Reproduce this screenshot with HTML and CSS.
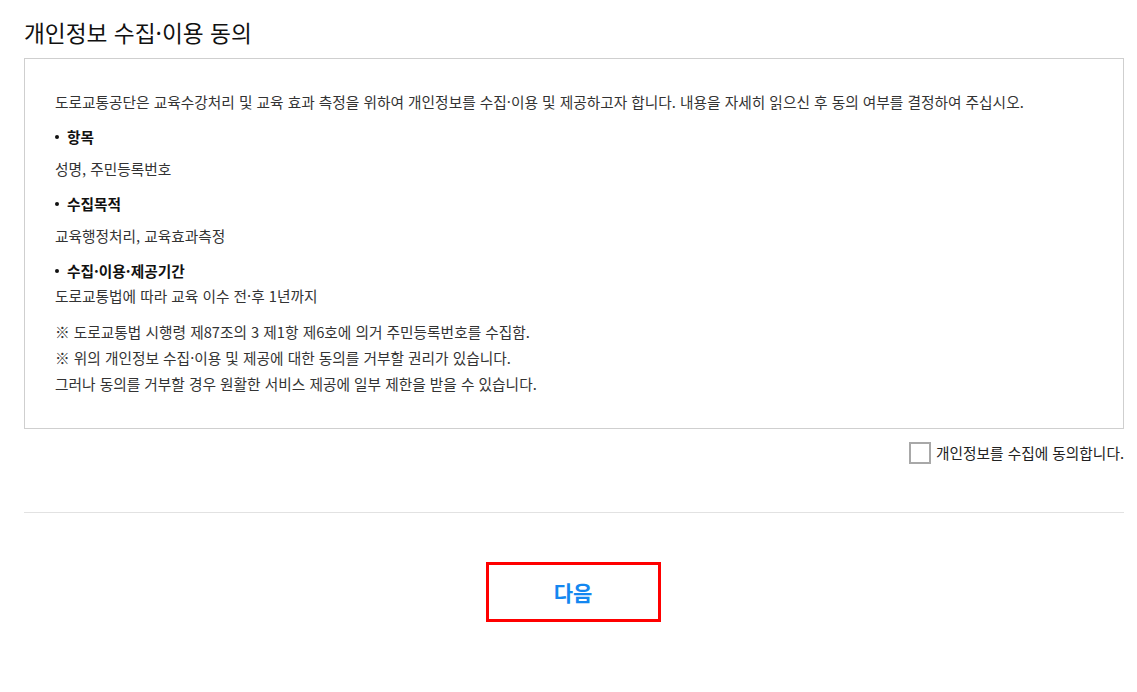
FILE: index.html
```html
<!DOCTYPE html>
<html lang="ko">
<head>
<meta charset="utf-8">
<title>개인정보 수집·이용 동의</title>
<link rel="stylesheet" href="styles.css">
</head>
<body>
<div class="page">
  <h2 class="title">개인정보 수집·이용 동의</h2>
  <div class="terms">
    <p class="intro">도로교통공단은 교육수강처리 및 교육 효과 측정을 위하여 개인정보를 수집·이용 및 제공하고자 합니다. 내용을 자세히 읽으신 후 동의 여부를 결정하여 주십시오.</p>
    <p class="head">항목</p>
    <p class="val">성명, 주민등록번호</p>
    <p class="head">수집목적</p>
    <p class="val">교육행정처리, 교육효과측정</p>
    <p class="head head-tight">수집·이용·제공기간</p>
    <p class="val val-last">도로교통법에 따라 교육 이수 전·후 1년까지</p>
    <div class="notes">
      <p>※ 도로교통법 시행령 제87조의 3 제1항 제6호에 의거 주민등록번호를 수집함.</p>
      <p>※ 위의 개인정보 수집·이용 및 제공에 대한 동의를 거부할 권리가 있습니다.</p>
      <p>그러나 동의를 거부할 경우 원활한 서비스 제공에 일부 제한을 받을 수 있습니다.</p>
    </div>
  </div>
  <div class="agree">
    <label class="agree-label"><span class="box"></span>개인정보를 수집에 동의합니다.</label>
  </div>
  <hr class="divider">
  <div class="actions">
    <button class="next" type="button">다음</button>
  </div>
</div>
</body>
</html>
```
FILE: styles.css
```css
html, body {
  margin: 0;
  padding: 0;
  background: #fff;
}
body {
  font-family: "Noto Sans CJK KR", "Noto Sans", sans-serif;
  color: #222;
}
.page {
  padding: 0 13px 0 24px;
}
.title {
  margin: 0 0 8px;
  padding-top: 16px;
  font-size: 22.7px;
  font-weight: 400;
  line-height: 34px;
  color: #111;
}
.terms {
  border: 1px solid #cfcfcf;
  padding: 30px 30px 31px;
  font-size: 14.7px;
  color: #333;
}
.terms p {
  margin: 0;
  line-height: 26px;
}
.terms .intro {
  margin-bottom: 9px;
}
.terms .head {
  font-weight: 700;
  color: #111;
  padding-left: 12px;
  position: relative;
  margin-bottom: 6px;
}
.terms .head.head-tight {
  margin-bottom: -1px;
}
.terms .head::before {
  content: "";
  position: absolute;
  left: 0;
  top: 11px;
  width: 4px;
  height: 4px;
  border-radius: 50%;
  background: #111;
}
.terms .val {
  margin-bottom: 9px;
}
.terms .val.val-last {
  margin-bottom: 10px;
}
.agree {
  display: flex;
  justify-content: flex-end;
  padding-top: 13px;
}
.agree-label {
  display: flex;
  align-items: center;
  gap: 5px;
  font-size: 14.7px;
  color: #222;
  line-height: 22px;
}
.box {
  width: 18px;
  height: 18px;
  border: 2px solid #a8a8a8;
  display: inline-block;
}
.divider {
  border: 0;
  border-top: 1px solid #e2e2e2;
  margin: 48px 0 0;
}
.actions {
  display: flex;
  justify-content: center;
  padding-top: 49px;
}
.next {
  width: 175px;
  height: 60px;
  box-sizing: border-box;
  border: 3px solid #ff0000;
  box-shadow: 0 4px 0 -3px #1a8cff;
  background: #fff;
  color: #1487f0;
  font-family: "Noto Sans CJK KR", "Noto Sans", sans-serif;
  font-size: 21px;
  font-weight: 700;
  margin-left: -2px;
  cursor: pointer;
}
```
